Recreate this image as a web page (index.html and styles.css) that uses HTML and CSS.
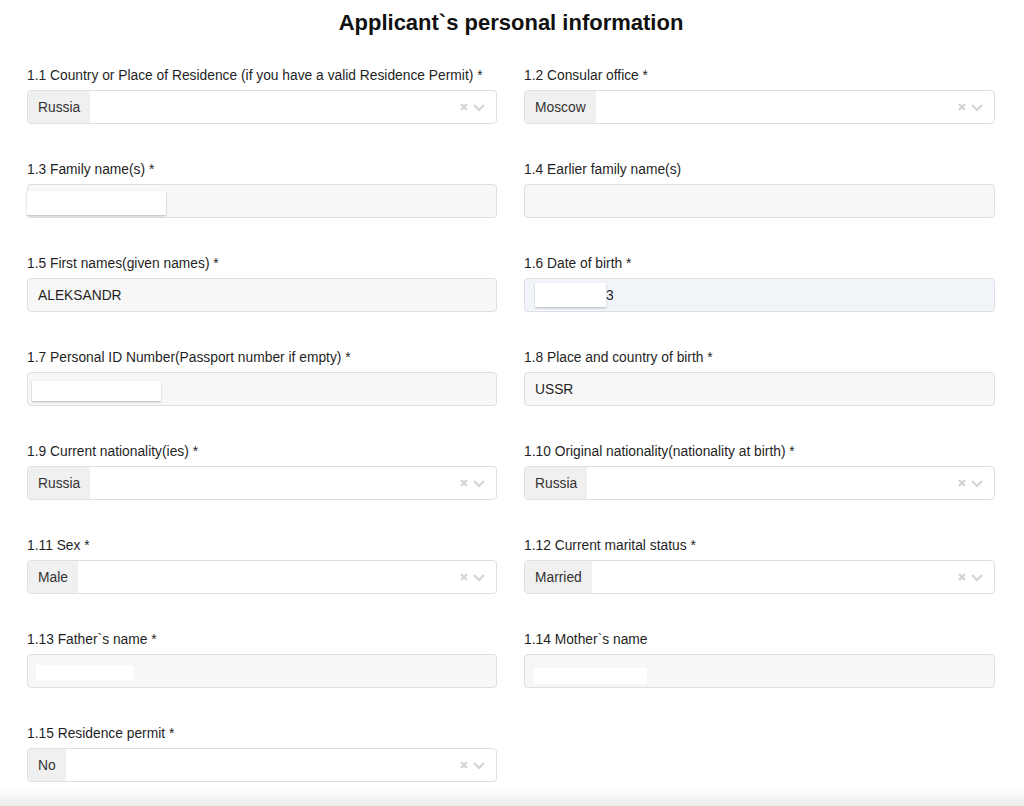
FILE: index.html
```html
<!DOCTYPE html>
<html lang="en">

<head>
    <meta charset="UTF-8">
    <meta name="viewport" content="width=device-width, initial-scale=1.0">
    <title>Applicant personal information</title>
    <link rel="stylesheet" href="styles.css">
</head>

<body>
    <div class="page">
        <h1>Applicant`s personal information</h1>
        <div class="form-grid">
            <div class="field">
                <label>1.1 Country or Place of Residence (if you have a valid Residence Permit) *</label>
                <div class="select">
                    <span class="chip">Russia</span>
                    <span class="select-icons">
                        <svg width="10" height="10" viewBox="0 0 10 10"><path d="M2 2 L8 8 M8 2 L2 8" /></svg>
                        <svg width="14" height="10" viewBox="0 0 14 10"><path d="M2 3 L7 8 L12 3" /></svg>
                    </span>
                </div>
            </div>
            <div class="field">
                <label>1.2 Consular office *</label>
                <div class="select">
                    <span class="chip">Moscow</span>
                    <span class="select-icons">
                        <svg width="10" height="10" viewBox="0 0 10 10"><path d="M2 2 L8 8 M8 2 L2 8" /></svg>
                        <svg width="14" height="10" viewBox="0 0 14 10"><path d="M2 3 L7 8 L12 3" /></svg>
                    </span>
                </div>
            </div>

            <div class="field">
                <label>1.3 Family name(s) *</label>
                <div class="input">
                    <span class="redact redact-family"></span>
                </div>
            </div>
            <div class="field">
                <label>1.4 Earlier family name(s)</label>
                <div class="input"></div>
            </div>

            <div class="field">
                <label>1.5 First names(given names) *</label>
                <div class="input">ALEKSANDR</div>
            </div>
            <div class="field">
                <label>1.6 Date of birth *</label>
                <div class="input input-date">
                    <span class="redact redact-date"></span>3
                </div>
            </div>

            <div class="field">
                <label>1.7 Personal ID Number(Passport number if empty) *</label>
                <div class="input">
                    <span class="redact redact-id"></span>
                </div>
            </div>
            <div class="field">
                <label>1.8 Place and country of birth *</label>
                <div class="input">USSR</div>
            </div>

            <div class="field">
                <label>1.9 Current nationality(ies) *</label>
                <div class="select">
                    <span class="chip">Russia</span>
                    <span class="select-icons">
                        <svg width="10" height="10" viewBox="0 0 10 10"><path d="M2 2 L8 8 M8 2 L2 8" /></svg>
                        <svg width="14" height="10" viewBox="0 0 14 10"><path d="M2 3 L7 8 L12 3" /></svg>
                    </span>
                </div>
            </div>
            <div class="field">
                <label>1.10 Original nationality(nationality at birth) *</label>
                <div class="select">
                    <span class="chip">Russia</span>
                    <span class="select-icons">
                        <svg width="10" height="10" viewBox="0 0 10 10"><path d="M2 2 L8 8 M8 2 L2 8" /></svg>
                        <svg width="14" height="10" viewBox="0 0 14 10"><path d="M2 3 L7 8 L12 3" /></svg>
                    </span>
                </div>
            </div>

            <div class="field">
                <label>1.11 Sex *</label>
                <div class="select">
                    <span class="chip">Male</span>
                    <span class="select-icons">
                        <svg width="10" height="10" viewBox="0 0 10 10"><path d="M2 2 L8 8 M8 2 L2 8" /></svg>
                        <svg width="14" height="10" viewBox="0 0 14 10"><path d="M2 3 L7 8 L12 3" /></svg>
                    </span>
                </div>
            </div>
            <div class="field">
                <label>1.12 Current marital status *</label>
                <div class="select">
                    <span class="chip">Married</span>
                    <span class="select-icons">
                        <svg width="10" height="10" viewBox="0 0 10 10"><path d="M2 2 L8 8 M8 2 L2 8" /></svg>
                        <svg width="14" height="10" viewBox="0 0 14 10"><path d="M2 3 L7 8 L12 3" /></svg>
                    </span>
                </div>
            </div>

            <div class="field">
                <label>1.13 Father`s name *</label>
                <div class="input">
                    <span class="redact redact-father"></span>
                </div>
            </div>
            <div class="field">
                <label>1.14 Mother`s name</label>
                <div class="input">
                    <span class="redact redact-mother"></span>
                </div>
            </div>

            <div class="field">
                <label>1.15 Residence permit *</label>
                <div class="select">
                    <span class="chip">No</span>
                    <span class="select-icons">
                        <svg width="10" height="10" viewBox="0 0 10 10"><path d="M2 2 L8 8 M8 2 L2 8" /></svg>
                        <svg width="14" height="10" viewBox="0 0 14 10"><path d="M2 3 L7 8 L12 3" /></svg>
                    </span>
                </div>
            </div>
        </div>
    </div>
    <div class="bottom-fade"></div>
</body>

</html>
```

FILE: styles.css
```css
body {
    margin: 0;
    font-family: "Liberation Sans", Arial, sans-serif;
    background-color: #ffffff;
    color: #1f1f1f;
    height: 806px;
    overflow: hidden;
    position: relative;
}

.page {
    padding: 0 29px 0 27px;
}

h1 {
    margin: 0;
    padding-top: 10px;
    height: 50px;
    font-size: 22px;
    font-weight: bold;
    text-align: center;
    color: #111;
}

.form-grid {
    display: grid;
    grid-template-columns: 470px 471px;
    column-gap: 27px;
    row-gap: 30px;
}

.field {
    display: flex;
    flex-direction: column;
}

.field label {
    font-size: 13.8px;
    line-height: 17px;
    height: 17px;
    margin-top: 7px;
    margin-bottom: 6px;
    color: #1f1f1f;
}

.select {
    height: 34px;
    box-sizing: border-box;
    border: 1px solid #dcdfe5;
    border-radius: 4px;
    background: #fff;
    display: flex;
    align-items: stretch;
    justify-content: space-between;
}

.chip {
    background: #f0f0f0;
    padding: 0 10px;
    display: flex;
    align-items: center;
    font-size: 13.8px;
    color: #333;
    border-radius: 3px 0 0 3px;
}

.select-icons {
    display: flex;
    align-items: center;
    gap: 3px;
    padding-right: 10px;
}

.select-icons path {
    fill: none;
    stroke: #cfd2d6;
    stroke-width: 2;
}

.input {
    height: 34px;
    box-sizing: border-box;
    border: 1px solid #dcdfe5;
    border-radius: 4px;
    background: #f7f7f8;
    display: flex;
    align-items: center;
    padding-left: 10px;
    font-size: 13.8px;
    color: #1f1f1f;
}

.input-date {
    background: #f1f4f9;
}

.redact {
    display: inline-block;
    background: #fff;
}

.redact-family {
    width: 139px;
    height: 24px;
    margin-left: -11px;
    margin-top: 4px;
    box-shadow: 0 1px 2px rgba(0, 0, 0, 0.25);
}

.redact-date {
    width: 71px;
    height: 24px;
    box-shadow: 0 1px 2px rgba(0, 0, 0, 0.25);
}

.redact-id {
    width: 129px;
    height: 20px;
    margin-left: -6px;
    margin-top: 3px;
    box-shadow: 0 1px 2px rgba(0, 0, 0, 0.25);
}

.redact-father {
    width: 98px;
    height: 15px;
    margin-left: -2px;
    margin-top: 3px;
}

.redact-mother {
    width: 113px;
    height: 16px;
    margin-left: -1px;
    margin-top: 9px;
}

.bottom-fade {
    position: absolute;
    left: 0;
    right: 0;
    bottom: 0;
    height: 18px;
    background: linear-gradient(to bottom, rgba(240, 240, 240, 0), #ececec);
}
```
